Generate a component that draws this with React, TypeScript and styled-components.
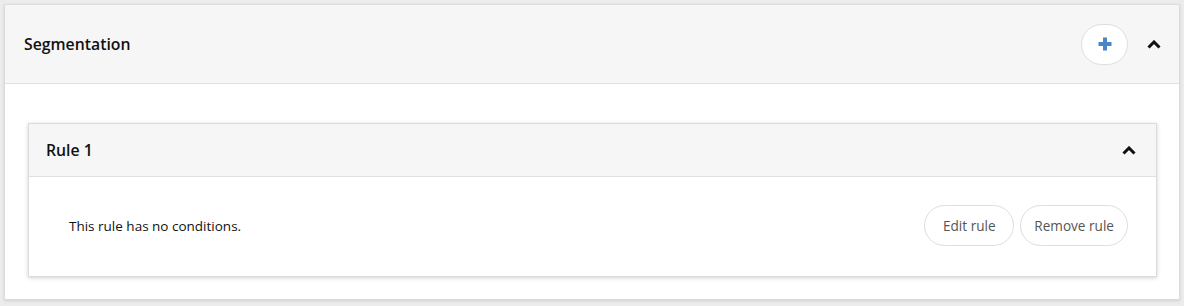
import styled, { createGlobalStyle } from "styled-components";

const GlobalStyle = createGlobalStyle`
  html, body {
    margin: 0;
    padding: 0;
    background: #ececec;
    font-family: "Open Sans", "Noto Sans", sans-serif;
    color: #111;
  }
  #root {
    padding: 4px 4px 6px 4px;
  }
`;

const Panel = styled.section`
  background: #fff;
  border: 1px solid #dcdcdc;
  box-shadow: 0 1px 3px rgba(0, 0, 0, 0.12);
`;

const PanelHeader = styled.header<{ $height: number; $left: number; $right: number }>`
  display: flex;
  align-items: center;
  justify-content: space-between;
  height: ${(p) => p.$height}px;
  padding: 0 ${(p) => p.$right}px 0 ${(p) => p.$left}px;
  background: #f6f6f6;
  border-bottom: 1px solid #e0e0e0;
  box-sizing: border-box;
`;

const Title = styled.h2`
  margin: 0;
  font-size: 15.8px;
  font-weight: 600;
  color: #111;
`;

const Actions = styled.div`
  display: flex;
  align-items: center;
  gap: 19px;
`;

const RoundButton = styled.button`
  display: flex;
  align-items: center;
  justify-content: center;
  width: 47px;
  height: 41px;
  padding: 0;
  border: 1px solid #dedede;
  border-radius: 21px;
  background: #fff;
  cursor: pointer;
`;

const Toggle = styled.button`
  display: flex;
  align-items: center;
  justify-content: center;
  width: 14px;
  height: 16px;
  padding: 0;
  border: none;
  background: transparent;
  cursor: pointer;
`;

const PanelBody = styled.div`
  padding: 39px 22px 22px 23px;
`;

const RuleCard = styled.div`
  background: #fff;
  border: 1px solid #dcdcdc;
  box-shadow: 0 1px 4px rgba(0, 0, 0, 0.18);
`;

const RuleBody = styled.div`
  display: flex;
  align-items: center;
  justify-content: space-between;
  padding: 28px 28px 30px 40px;
`;

const Message = styled.p`
  margin: 0;
  font-size: 13.5px;
  color: #111;
`;

const ButtonRow = styled.div`
  display: flex;
  gap: 6px;
`;

const PillButton = styled.button`
  min-width: 90px;
  height: 41px;
  padding: 0 13px;
  border: 1px solid #dedede;
  border-radius: 21px;
  background: #fff;
  font-family: "Open Sans", "Noto Sans", sans-serif;
  font-size: 13.6px;
  color: #555;
  cursor: pointer;
`;

const PlusIcon = () => (
  <svg width="16" height="16" viewBox="0 0 16 16">
    <path d="M8 1.5v13M1.5 8h13" stroke="#4a86c4" strokeWidth="4" />
  </svg>
);

const ChevronUp = () => (
  <svg width="14" height="9" viewBox="0 0 14 9">
    <path d="M1.5 7.5L7 2l5.5 5.5" fill="none" stroke="#111" strokeWidth="3" />
  </svg>
);

const App = () => {
  return (
    <>
      <GlobalStyle />
      <Panel>
        <PanelHeader $height={79} $left={19} $right={18}>
          <Title>Segmentation</Title>
          <Actions>
            <RoundButton aria-label="Add rule">
              <PlusIcon />
            </RoundButton>
            <Toggle aria-label="Collapse">
              <ChevronUp />
            </Toggle>
          </Actions>
        </PanelHeader>
        <PanelBody>
          <RuleCard>
            <PanelHeader $height={53} $left={17} $right={20}>
              <Title>Rule 1</Title>
              <Toggle aria-label="Collapse rule">
                <ChevronUp />
              </Toggle>
            </PanelHeader>
            <RuleBody>
              <Message>This rule has no conditions.</Message>
              <ButtonRow>
                <PillButton>Edit rule</PillButton>
                <PillButton>Remove rule</PillButton>
              </ButtonRow>
            </RuleBody>
          </RuleCard>
        </PanelBody>
      </Panel>
    </>
  );
};

export default App;
